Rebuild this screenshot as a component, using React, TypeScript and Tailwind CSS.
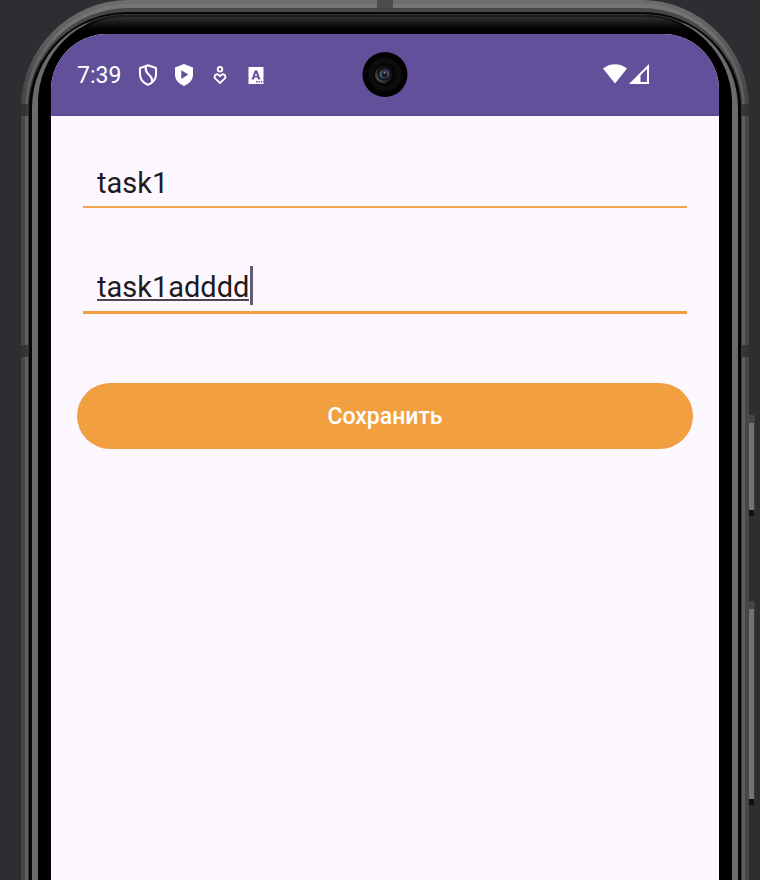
import { useState } from "react";

function StatusIcons() {
  return (
    <div className="flex items-center text-white">
      <svg className="h-6 w-5" viewBox="0 0 20 24" fill="none" stroke="currentColor" strokeWidth="2" aria-hidden="true">
        <path d="M10 2.200 18 5v6.500c0 5-3.400 8.400-8 10.300-4.600-1.900-8-5.300-8-10.300V5Z" />
        <path d="M7.800 3v3.500c0 2.200 1 3.200 2.600 4.700 2.400 2.200 4 3.600 3.800 7.600" strokeWidth="2.200" />
      </svg>
      <svg className="ml-4 h-6 w-5" viewBox="0 0 20 24" aria-hidden="true">
        <path d="M10 1 19 4.400v7.100c0 5.300-3.700 9.300-9 11.500-5.300-2.200-9-6.200-9-11.500V4.400Z" fill="currentColor" />
        <path d="M7.300 7.300v8.600l7-4.300Z" fill="#62509b" />
      </svg>
      <svg className="ml-4 h-6 w-5" viewBox="0 0 20 24" fill="none" stroke="currentColor" strokeWidth="1.800" aria-hidden="true">
        <circle cx="10" cy="6.300" r="2.300" />
        <path d="m10 20-4.600-4.400c-2.400-2.600.9-5.600 3.200-3.700L10 13.200l1.400-1.300c2.300-1.900 5.600 1.100 3.200 3.700Z" />
      </svg>
      <svg className="ml-4 h-6 w-5" viewBox="0 0 20 24" aria-hidden="true">
        <path d="M2.500 4h15v17h-15Z" fill="currentColor" />
        <path d="m5.500 16.500 3.200-9h2.600l3.200 9h-2.400l-.6-1.900H8.500l-.6 1.900Zm3.500-3.600h2L10 9.800Z" fill="#62509b" />
        <path d="M10 18h1.500v1.500H10Zm2.500 0H14v1.500h-1.500Zm2.500 0h1.500v1.500H15Z" fill="#62509b" />
      </svg>
    </div>
  );
}

function SignalIcons() {
  return (
    <div className="flex items-center gap-0.5 text-white">
      <svg className="h-6 w-6" viewBox="0 0 24 24" aria-hidden="true">
        <path d="M0 5.500C7-.3 17-.3 24 5.500L12 20.500Z" fill="currentColor" />
      </svg>
      <svg className="h-6 w-5" viewBox="0 0 20 24" aria-hidden="true">
        <path d="M0 21 20 1v20Zm11.500-2H18V5.800l-6.500 6.500Z" fill="currentColor" fillRule="evenodd" />
      </svg>
    </div>
  );
}

function Camera() {
  return (
    <svg className="h-[46px] w-[46px]" viewBox="0 0 46 46" aria-hidden="true">
      <defs>
        <radialGradient id="lens" cx="0.500" cy="0.500" r="0.500">
          <stop offset="0" stopColor="#253645" />
          <stop offset="0.600" stopColor="#191c2a" />
          <stop offset="1" stopColor="#0c0c0e" />
        </radialGradient>
        <linearGradient id="rim" x1="0" y1="1" x2="1" y2="0">
          <stop offset="0" stopColor="#6a6762" />
          <stop offset="0.500" stopColor="#1c1b1b" />
          <stop offset="1" stopColor="#0c0c0e" />
        </linearGradient>
        <linearGradient id="glass" x1="0" y1="0.500" x2="1" y2="0.300">
          <stop offset="0" stopColor="#3c6a80" />
          <stop offset="0.500" stopColor="#1b2636" />
          <stop offset="1" stopColor="#6c4d7c" />
        </linearGradient>
      </defs>
      <circle cx="23" cy="22.500" r="22.500" fill="#020202" />
      <circle cx="23" cy="22.500" r="17" fill="#0c0c0c" />
      <circle cx="23" cy="22.500" r="13" fill="#070707" stroke="#131313" />
      <circle cx="21.500" cy="22.500" r="8.500" fill="url(#rim)" />
      <circle cx="22" cy="22" r="6.500" fill="url(#lens)" />
      <circle cx="22.500" cy="22" r="5" fill="url(#glass)" />
      <circle cx="22.500" cy="22.500" r="2.500" fill="#151d2b" />
      <circle cx="22.500" cy="20.500" r="1" fill="#8793a5" />
    </svg>
  );
}

function AntennaBand({ className }: { className: string }) {
  return (
    <div className={`absolute left-0 flex h-3 w-full justify-between ${className}`}>
      <div className="w-[7px] bg-[#303030]/85" />
      <div className="w-[7px] bg-[#303030]/85" />
    </div>
  );
}

function SideKey({ className }: { className: string }) {
  return (
    <div className={`absolute left-full w-[6px] rounded-r-xs border-t-8 border-b-6 border-r border-t-[#454545] border-r-[#3c3c3c] border-b-[#111111] bg-[#737373] ${className}`} />
  );
}

export default function App() {
  const [title, setTitle] = useState("task1");
  const [details, setDetails] = useState("task1adddd");

  return (
    <div className="flex h-screen overflow-hidden bg-[#2d2e32] pr-[11px] pl-[21px] font-[Roboto,sans-serif]">
      <div className="relative flex h-[calc(100%+140px)] flex-1 shrink-0 flex-col rounded-[108px] bg-linear-to-b from-[#6e6e6e] to-[#474747] to-[90px] px-1 pt-1">
        <div className="flex flex-1 flex-col rounded-[104px] border-x-3 border-t-4 border-x-[#707070]/60 border-t-[#7c7c7c]/60">
          <div className="flex flex-1 flex-col rounded-[100px] border-x border-t-4 border-x-[#353535] border-t-[#484848] bg-[#060606] px-[3px] pt-[2px]">
            <div className="flex flex-1 flex-col rounded-[94px] border-x-6 border-t border-x-[#6b6b6b] border-t-[#353535] bg-black">
              <div className="flex flex-1 flex-col rounded-[88px] bg-linear-to-b from-[#222222] to-black to-[16px] px-[3px] pt-[2px]">
                <div className="flex flex-1 flex-col rounded-[84px] bg-linear-to-b from-[#303030] to-black to-[18px] px-[10px] pt-[17px]">
                  <div className="flex flex-1 flex-col overflow-hidden rounded-t-[56px] bg-[#fdf8ff]">
                    <header className="grid h-[82px] grid-cols-[1fr_auto_1fr] items-center border-b border-[#57478f] bg-[#62509b] pr-[70px] pl-[26px]">
                      <div className="flex items-center gap-[17px]">
                        <time className="pt-[3px] text-[23px] leading-7 text-white">7:39</time>
                        <StatusIcons />
                      </div>
                      <div className="ml-11">
                        <Camera />
                      </div>
                      <div className="flex justify-end">
                        <SignalIcons />
                      </div>
                    </header>
                    <form className="flex flex-col px-[26px] pt-[42px]" onSubmit={(e) => e.preventDefault()}>
                      <div className="mx-1.5 flex h-[50px] items-center border-b-2 border-[#f2a54c] px-3.5">
                        <input
                          aria-label="Название"
                          className="w-full bg-transparent pt-[2px] text-[29px] leading-[39px] text-[#1d1b20] outline-none"
                          value={title}
                          onChange={(e) => setTitle(e.target.value)}
                        />
                      </div>
                      <div className="mx-1.5 mt-[54px] flex h-[52px] items-center border-b-3 border-[#f09e3e] px-3.5">
                        <input
                          aria-label="Описание"
                          className="field-sizing-content bg-transparent pt-[2px] pr-px text-[29px] leading-[39px] text-[#1d1b20] underline decoration-[#4b474e] decoration-2 underline-offset-2 outline-none [text-decoration-skip-ink:none]"
                          value={details}
                          onChange={(e) => setDetails(e.target.value)}
                        />
                        <span className="mb-[2px] h-[39px] w-[3px] bg-[#625b71]" />
                      </div>
                      <button type="submit" className="mt-[69px] h-[66px] rounded-full bg-[#f29f3f] pt-[3px] text-[23px] font-medium text-white">
                        Сохранить
                      </button>
                    </form>
                  </div>
                </div>
              </div>
            </div>
          </div>
        </div>
        <AntennaBand className="top-[104px]" />
        <AntennaBand className="top-[345px]" />
        <div className="absolute top-0 left-1/2 h-3 w-4 -translate-x-1/2 bg-[#454545]/85" />
        <SideKey className="top-[415px] h-[101px]" />
        <SideKey className="top-[601px] h-[204px]" />
      </div>
    </div>
  );
}
